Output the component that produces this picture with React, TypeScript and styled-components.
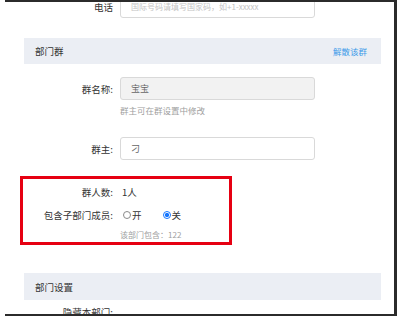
import styled, { createGlobalStyle } from "styled-components";

const GlobalStyle = createGlobalStyle`
  html, body {
    margin: 0;
    padding: 0;
    background: #fff;
  }
  body {
    font-family: "Noto Sans CJK SC", "Noto Sans", sans-serif;
    color: #333;
  }
`;

const Frame = styled.div`
  margin-left: 5px;
  width: 389px;
  height: 312px;
  border-top: 2px solid #2b2b2b;
  border-right: 3px solid #2b2b2b;
  border-bottom: 2px solid #2b2b2b;
  overflow: hidden;
  background: #fff;
`;

const Inner = styled.div`
  margin-top: -7px;
  padding: 0 13px 0 19px;
`;

const Row = styled.div<{ $top?: number; $h?: number }>`
  display: flex;
  align-items: center;
  height: ${(p) => p.$h ?? 23}px;
  margin-top: ${(p) => p.$top ?? 0}px;
`;

const Label = styled.div`
  width: 89px;
  flex-shrink: 0;
  text-align: right;
  font-size: 9.5px;
  color: #333;
  white-space: nowrap;
`;

const Input = styled.input<{ $disabled?: boolean }>`
  box-sizing: border-box;
  margin: 0 0 0 7px;
  width: 195px;
  height: 23px;
  padding: 0 10px;
  border: 1px solid #d9d9d9;
  border-radius: 3px;
  outline: none;
  font-family: inherit;
  font-size: 9px;
  color: #666;
  background: ${(p) => (p.$disabled ? "#f2f2f2" : "#fff")};
  &::placeholder {
    color: #c4c4c4;
    font-size: 8px;
  }
`;

const SectionBar = styled.div<{ $top: number; $h?: number }>`
  display: flex;
  align-items: center;
  justify-content: space-between;
  height: ${(p) => p.$h ?? 26}px;
  margin-top: ${(p) => p.$top}px;
  padding: 0 14px 0 11px;
  background: #ebeef4;
  font-size: 9.5px;
  color: #333;
`;

const BarLink = styled.span`
  font-size: 8.5px;
  color: #3d9be9;
`;

const Hint = styled.div<{ $top: number; $size?: number }>`
  margin: ${(p) => p.$top}px 0 0 96px;
  line-height: 12px;
  font-size: ${(p) => p.$size ?? 8.5}px;
  color: #a0a0a0;
`;

const RedBox = styled.div`
  margin: 16px 0 0 -4px;
  width: 205px;
  padding: 4px 0 1px 1px;
  border: 3px solid #e60012;
`;

const Value = styled.span`
  margin-left: 9px;
  font-size: 9.5px;
  color: #333;
`;

const RadioGroup = styled.div`
  display: flex;
  align-items: center;
  margin-left: 10px;
`;

const RadioOption = styled.label<{ $gap?: number }>`
  display: inline-flex;
  align-items: center;
  margin-right: ${(p) => p.$gap ?? 0}px;
  font-size: 9.5px;
  color: #333;
`;

const RadioDot = styled.span<{ $checked?: boolean }>`
  box-sizing: border-box;
  width: 8px;
  height: 8px;
  margin-right: 1px;
  border-radius: 50%;
  border: 1px solid ${(p) => (p.$checked ? "#1677ff" : "#8a8a8a")};
  background: ${(p) =>
    p.$checked ? "radial-gradient(circle, #1677ff 0 45%, #fff 55%)" : "#fff"};
`;

export default function App() {
  return (
    <>
      <GlobalStyle />
      <Frame>
        <Inner>
          <Row>
            <Label>电话</Label>
            <Input readOnly placeholder="国际号码请填写国家码，如+1-xxxxx" />
          </Row>

          <SectionBar $top={20}>
            <span>部门群</span>
            <BarLink>解散该群</BarLink>
          </SectionBar>

          <Row $top={13}>
            <Label>群名称:</Label>
            <Input readOnly $disabled value="宝宝" />
          </Row>
          <Hint $top={4}>群主可在群设置中修改</Hint>

          <Row $top={21}>
            <Label>群主:</Label>
            <Input readOnly value="刁" />
          </Row>

          <RedBox>
            <Row $h={18}>
              <Label>群人数:</Label>
              <Value>1人</Value>
            </Row>
            <Row $h={18} $top={5}>
              <Label>包含子部门成员:</Label>
              <RadioGroup>
                <RadioOption $gap={21}>
                  <RadioDot />开
                </RadioOption>
                <RadioOption>
                  <RadioDot $checked />关
                </RadioOption>
              </RadioGroup>
            </Row>
            <Hint $top={5} $size={8}>该部门包含：122</Hint>
          </RedBox>

          <SectionBar $top={28} $h={27}>
            <span>部门设置</span>
          </SectionBar>

          <Row $h={18} $top={3}>
            <Label>隐藏本部门:</Label>
          </Row>
        </Inner>
      </Frame>
    </>
  );
}
